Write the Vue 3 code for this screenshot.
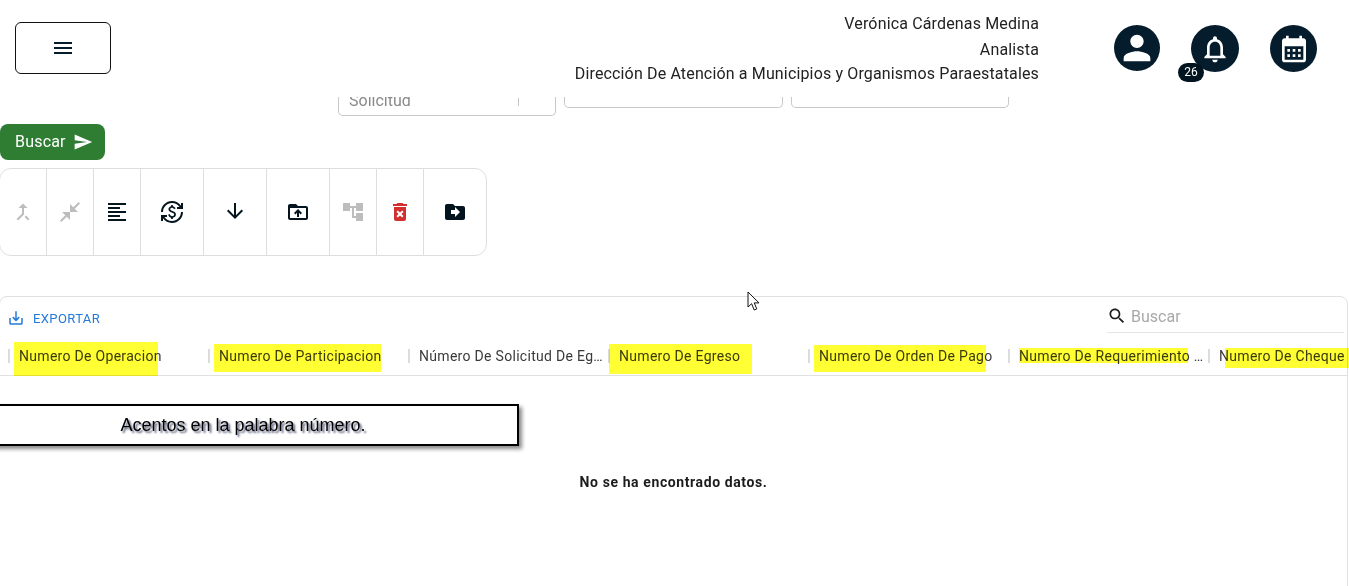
<script setup>
const icons = {
  merge: 'M17 20.41L18.41 19 15 15.59 13.59 17 17 20.41zM7.5 8H11v5.59L5.59 19 7 20.41l6-6V8h3.5L12 3.5 7.5 8z',
  compress: 'M22 3.41l-5.29 5.29L20 12h-8V4l3.29 3.29L20.59 2 22 3.41zM3.41 22l5.29-5.29L12 20v-8H4l3.29 3.29L2 20.59 3.41 22z',
  align: 'M15 15H3v2h12v-2zm0-8H3v2h12V7zM3 13h18v-2H3v2zm0 8h18v-2H3v2zM3 3v2h18V3H3z',
  exchange: 'M12.89 11.1c-1.78-.59-2.64-.96-2.64-1.9 0-1.02 1.11-1.39 1.81-1.39 1.31 0 1.79.99 1.9 1.34l1.58-.67c-.15-.44-.82-1.91-2.66-2.23V5h-1.75v1.26c-2.6.56-2.62 2.85-2.62 2.96 0 2.27 2.25 2.91 3.35 3.31 1.58.56 2.28 1.07 2.28 2.03 0 1.13-1.05 1.61-1.98 1.61-1.82 0-2.34-1.87-2.4-2.09l-1.66.67c.63 2.19 2.28 2.78 3.02 2.96V19h1.75v-1.24c.52-.09 3.02-.59 3.02-3.22.01-1.39-.6-2.61-3.4-3.44zM3 21H1v-6h6v2H4.52c1.61 2.41 4.36 4 7.48 4 4.97 0 9-4.03 9-9h2c0 6.08-4.92 11-11 11-3.72 0-7.01-1.85-9-4.67V21zm-2-9C1 5.92 5.92 1 12 1c3.72 0 7.01 1.85 9 4.67V3h2v6h-6V7h2.48C17.87 4.59 15.12 3 12 3c-4.97 0-9 4.03-9 9H1z',
  down: 'M20 12l-1.41-1.41L13 16.17V4h-2v12.17l-5.58-5.59L4 12l8 8 8-8z',
  upload: 'M20 6h-8l-2-2H4c-1.1 0-1.99.9-1.99 2L2 18c0 1.1.9 2 2 2h16c1.1 0 2-.9 2-2V8c0-1.1-.9-2-2-2zm0 12H4V8h16v10zM11 17h2v-4.16l1.59 1.59L16 13.01 12.01 9 8 13.01l1.41 1.41L11 12.84V17z',
  tree: 'M22 11V3h-7v3H9V3H2v8h7V8h2v10h4v3h7v-8h-7v3h-2V8h2v3z',
  trash: 'M6 19c0 1.1.9 2 2 2h8c1.1 0 2-.9 2-2V7H6v12zm2.46-7.12l1.41-1.41L12 12.59l2.12-2.12 1.41 1.41L13.41 14l2.12 2.12-1.41 1.41L12 15.41l-2.12 2.12-1.41-1.41L10.59 14l-2.13-2.12zM15.5 4l-1-1h-5l-1 1H5v2h14V4z',
  move: 'M20 6h-8l-2-2H4c-1.1 0-1.99.9-1.99 2L2 18c0 1.1.9 2 2 2h16c1.1 0 2-.9 2-2V8c0-1.1-.9-2-2-2zm-8 11v-3H8v-4h4V7l5 5-5 5z'
}

const tools = [
  { d: icons.merge, tone: 'off' },
  { d: icons.compress, tone: 'off' },
  { d: icons.align, tone: 'on' },
  { d: icons.exchange, tone: 'on', wide: true },
  { d: icons.down, tone: 'on', wide: true, lift: true },
  { d: icons.upload, tone: 'on', wide: true },
  { d: icons.tree, tone: 'off' },
  { d: icons.trash, tone: 'red' },
  { d: icons.move, tone: 'on', wide: true }
]

const columns = [
  'Numero De Operacion',
  'Numero De Participacion',
  'Número De Solicitud De Egreso',
  'Numero De Egreso',
  'Numero De Orden De Pago',
  'Numero De Requerimiento De Pago',
  'Numero De Cheque'
]

const marks = [
  { x: 14, y: 342, w: 144, h: 34 },
  { x: 214, y: 344, w: 167, h: 28 },
  { x: 609, y: 344, w: 143, h: 30 },
  { x: 814, y: 345, w: 172, h: 27 },
  { x: 1019, y: 348, w: 169, h: 15 },
  { x: 1225, y: 348, w: 124, h: 20 }
]

const markStyle = (m) => ({
  left: m.x + 'px',
  top: m.y + 'px',
  width: m.w + 'px',
  height: m.h + 'px'
})
</script>

<template>
  <div class="page">
    <header class="topbar">
      <button class="menu" type="button" aria-label="Menú">
        <svg viewBox="0 0 24 24" width="24" height="24"><path d="M3 18h18v-2H3v2zm0-5h18v-2H3v2zm0-7v2h18V6H3z" /></svg>
      </button>
      <div class="user">
        <p>Verónica Cárdenas Medina</p>
        <p class="role">Analista</p>
        <p>Dirección De Atención a Municipios y Organismos Paraestatales</p>
      </div>
      <div class="circles">
        <span class="circle c1">
          <svg viewBox="0 0 24 24" width="40" height="40"><path d="M12 12c2.21 0 4-1.79 4-4s-1.79-4-4-4-4 1.79-4 4 1.79 4 4 4zm0 2c-2.67 0-8 1.34-8 4v2h16v-2c0-2.66-5.33-4-8-4z" /></svg>
        </span>
        <span class="circle c2">
          <svg viewBox="0 0 24 24" width="32" height="32"><path d="M12 22c1.1 0 2-.9 2-2h-4c0 1.1.9 2 2 2zm6-6v-5c0-3.07-1.64-5.64-4.5-6.32V4c0-.83-.67-1.5-1.5-1.5s-1.5.67-1.5 1.5v.68C7.63 5.36 6 7.92 6 11v5l-2 2v1h16v-1l-2-2zm-2 1H8v-6c0-2.48 1.51-4.5 4-4.5s4 2.02 4 4.5v6z" /></svg>
          <span class="badge">26</span>
        </span>
        <span class="circle c3">
          <svg viewBox="0 0 24 24" width="32" height="32"><path d="M19 4h-1V2h-2v2H8V2H6v2H5c-1.11 0-1.99.9-1.99 2L3 20c0 1.1.89 2 2 2h14c1.1 0 2-.9 2-2V6c0-1.1-.9-2-2-2zm0 16H5V10h14v10zM9 14H7v-2h2v2zm4 0h-2v-2h2v2zm4 0h-2v-2h2v2zm-8 4H7v-2h2v2zm4 0h-2v-2h2v2zm4 0h-2v-2h2v2z" /></svg>
        </span>
      </div>
    </header>

    <section class="filters">
      <div class="field tall">
        <span class="value">Solicitud</span>
        <i class="divider"></i>
      </div>
      <div class="field"></div>
      <div class="field last"></div>
    </section>

    <button class="search-btn" type="button">
      Buscar
      <svg viewBox="0 0 24 24" width="20" height="20"><path d="M2.01 21L23 12 2.01 3 2 10l15 2-15 2z" /></svg>
    </button>

    <div class="toolbar">
      <div
        v-for="(tool, i) in tools"
        :key="i"
        class="tool"
        :class="[tool.tone, { wide: tool.wide, lift: tool.lift }]"
      >
        <svg viewBox="0 0 24 24" width="24" height="24"><path :d="tool.d" /></svg>
      </div>
    </div>

    <section class="card">
      <div class="card-top">
        <div class="export">
          <svg viewBox="0 0 24 24" width="18" height="18"><path d="M19 12v7H5v-7H3v7c0 1.1.9 2 2 2h14c1.1 0 2-.9 2-2v-7h-2zm-6 .67l2.59-2.58L17 11.5l-5 5-5-5 1.41-1.41L11 12.67V3h2z" /></svg>
          <span>EXPORTAR</span>
        </div>
        <div class="quick">
          <svg viewBox="0 0 24 24" width="20" height="20"><path d="M15.5 14h-.79l-.28-.27C15.41 12.59 16 11.11 16 9.5 16 5.91 13.09 3 9.5 3S3 5.91 3 9.5 5.91 16 9.5 16c1.61 0 3.09-.59 4.23-1.57l.27.28v.79l5 4.99L20.49 19l-4.99-5zm-6 0C7.01 14 5 11.99 5 9.5S7.01 5 9.5 5 14 7.01 14 9.5 11.99 14 9.5 14z" /></svg>
          <span>Buscar</span>
        </div>
      </div>
      <div class="thead">
        <div v-for="col in columns" :key="col" class="th"><span>{{ col }}</span></div>
      </div>
      <p class="empty">No se ha encontrado datos.</p>
    </section>

    <i v-for="(m, i) in marks" :key="'m' + i" class="mark" :style="markStyle(m)"></i>

    <div class="callout">Acentos en la palabra número.</div>

    <svg class="cursor" viewBox="0 0 13 20" width="13" height="20">
      <path d="M1 1v15l3.6-3.3L7.2 19l2.6-1.1-2.6-6H12z" fill="#fff" stroke="#111" stroke-width="1" />
    </svg>
  </div>
</template>

<style>
html, body { margin: 0; background: #fff; overflow: hidden; }
</style>

<style scoped>
.page {
  position: relative;
  width: 1349px;
  height: 586px;
  overflow: hidden;
  background: #fff;
  font-family: Roboto, "Liberation Sans", sans-serif;
  color: #1d1d1d;
}

.topbar {
  display: flex;
  align-items: flex-start;
  height: 97px;
  box-sizing: border-box;
  padding: 12px 0 0 15px;
}
.menu {
  display: flex;
  align-items: center;
  justify-content: center;
  width: 96px;
  height: 52px;
  margin-top: 10px;
  padding: 0;
  background: #fff;
  border: 1px solid #111;
  border-radius: 6px;
}
.menu svg { fill: #041c2c; }
.user {
  width: 928px;
  text-align: right;
  font-size: 16px;
  line-height: 24px;
  letter-spacing: .15px;
  color: #222;
}
.user p { margin: 0; }
.user .role { margin: 2px 0 0; }
.circles {
  display: flex;
  margin: 13px 0 0 75px;
}
.circle {
  position: relative;
  display: flex;
  align-items: center;
  justify-content: center;
  border-radius: 50%;
  background: #041c2c;
}
.circle svg { fill: #fff; }
.c1 { width: 46px; height: 46px; }
.c2 { width: 48px; height: 47px; margin-left: 31px; }
.c3 { width: 47px; height: 47px; margin-left: 31px; }
.badge {
  position: absolute;
  left: -13px;
  top: 38px;
  width: 26px;
  height: 19px;
  border-radius: 10px;
  background: #02141f;
  color: #fff;
  font-size: 12px;
  line-height: 19px;
  text-align: center;
}

.filters {
  display: flex;
  align-items: flex-start;
  gap: 8px;
  height: 19px;
  margin-left: 338px;
  margin-bottom: 8px;
}
.field {
  position: relative;
  width: 219px;
  height: 11px;
  box-sizing: border-box;
  overflow: hidden;
  border: 1px solid #c8c8c8;
  border-top: 0;
  border-radius: 0 0 5px 5px;
}
.field.tall { width: 218px; height: 19px; }
.field.last { width: 218px; }
.value {
  display: block;
  margin: -8px 0 0 10px;
  font-size: 16px;
  line-height: 24px;
  color: #8a8a8a;
}
.divider {
  position: absolute;
  left: 179px;
  top: 1px;
  width: 1px;
  height: 8px;
  background: #c4c4c4;
}

.search-btn {
  display: flex;
  align-items: center;
  gap: 8px;
  width: 105px;
  height: 36px;
  padding: 0 0 2px 15px;
  border: 0;
  border-radius: 8px;
  background: #2e7d32;
  color: #fff;
  font: 400 16px Roboto, sans-serif;
  letter-spacing: .2px;
}
.search-btn svg { fill: #fff; margin-top: 2px; margin-left: -1px; }

.toolbar {
  display: flex;
  width: 488px;
  height: 88px;
  margin: 8px 0 0 -1px;
  box-sizing: border-box;
  border: 1px solid #dedede;
  border-radius: 12px;
}
.tool {
  display: flex;
  align-items: center;
  justify-content: center;
  width: 47px;
  box-sizing: border-box;
  border-right: 1px solid #dedede;
}
.tool.wide { width: 63px; }
.tool:last-child { border-right: 0; width: 62px; }
.tool.lift svg { margin-top: -2px; }
.on svg { fill: #03141f; }
.off svg { fill: #bdbdbd; }
.red svg { fill: #d32f2f; }

.card {
  height: 340px;
  width: 1349px;
  margin: 40px 0 0 -1px;
  box-sizing: border-box;
  border: 1px solid #e0e0e0;
  border-radius: 8px;
}
.card-top {
  display: flex;
  justify-content: space-between;
  height: 39px;
}
.export {
  display: flex;
  align-items: center;
  gap: 8px;
  height: 18px;
  margin: 12px 0 0 7px;
  color: #2479d9;
  font-size: 13px;
  letter-spacing: .4px;
}
.export svg { fill: #2479d9; }
.quick {
  display: flex;
  align-items: center;
  gap: 4px;
  width: 237px;
  height: 36px;
  box-sizing: border-box;
  padding-top: 3px;
  margin-right: 3px;
  border-bottom: 1px solid #e4e4e4;
  font-size: 16px;
  color: #a9a9a9;
}
.quick svg { fill: #1d1d1d; }
.thead {
  display: flex;
  align-items: center;
  height: 40px;
  box-sizing: border-box;
  padding-left: 8px;
  overflow: hidden;
  border-bottom: 1px solid #e0e0e0;
}
.th {
  position: relative;
  flex: 0 0 200px;
  min-width: 0;
  box-sizing: border-box;
  padding: 0 2px 0 11px;
  font-size: 14px;
  line-height: 20px;
  letter-spacing: .3px;
  color: #3a3a3a;
}
.th::before {
  content: "";
  position: absolute;
  left: 0;
  top: 3px;
  width: 2px;
  height: 14px;
  background: #dcdcdc;
}
.th span {
  display: block;
  overflow: hidden;
  white-space: nowrap;
  text-overflow: ellipsis;
}
.empty {
  margin: 99px 0 0;
  text-align: center;
  font-size: 14px;
  font-weight: 700;
  line-height: 15px;
  letter-spacing: .6px;
  color: #1c1c1c;
}

.mark {
  position: absolute;
  background: #ffff33;
  mix-blend-mode: multiply;
}
.callout {
  position: absolute;
  left: -33px;
  top: 404px;
  width: 552px;
  height: 42px;
  box-sizing: border-box;
  border: 2px solid #000;
  background: #fff;
  box-shadow: 3px 3px 4px #8a8a8a;
  font-family: "Liberation Sans", Arial, sans-serif;
  font-size: 18px;
  line-height: 38px;
  text-align: center;
  color: #000;
  text-shadow: 2px 2px 2px rgba(20, 30, 70, .7);
}
.cursor {
  position: absolute;
  left: 747px;
  top: 291px;
}
</style>
